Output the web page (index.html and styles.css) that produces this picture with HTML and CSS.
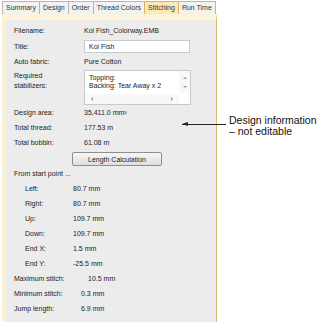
FILE: index.html
```html
<!DOCTYPE html>
<html lang="en">
<head>
  <meta charset="UTF-8"/>
  <title>Stitching</title>
  <link rel="stylesheet" href="styles.css">
</head>
<body>
  <div class="page">
    <div class="tabs">
      <div class="tab">Summary</div>
      <div class="tab">Design</div>
      <div class="tab">Order</div>
      <div class="tab">Thread Colors</div>
      <div class="tab active">Stitching</div>
      <div class="tab">Run Time</div>
    </div>

    <div class="panel">
      <div class="row first">
        <span class="label">Filename:</span>
        <span class="value">Koi Fish_Colorway.EMB</span>
      </div>
      <div class="row title-row">
        <span class="label">Title:</span>
        <div class="field">Koi Fish</div>
      </div>
      <div class="row">
        <span class="label">Auto fabric:</span>
        <span class="value">Pure Cotton</span>
      </div>
      <div class="row stab-row">
        <span class="label two-line">Required<br>stabilizers:</span>
        <div class="listbox">
          <div class="list-text">Topping:<br>Backing: Tear Away x 2</div>
          <div class="vscroll">
            <span class="arr up"></span>
            <span class="arr down"></span>
          </div>
          <div class="hscroll">
            <span class="arr left"></span>
            <span class="arr right"></span>
          </div>
        </div>
      </div>
      <div class="row">
        <span class="label">Design area:</span>
        <span class="value">35,411.0 mm²</span>
      </div>
      <div class="row">
        <span class="label">Total thread:</span>
        <span class="value">177.53 m</span>
      </div>
      <div class="row">
        <span class="label">Total bobbin:</span>
        <span class="value">61.08 m</span>
      </div>
      <div class="btn-row">
        <button class="btn">Length Calculation</button>
      </div>
      <div class="row">
        <span class="label">From start point ...</span>
      </div>
      <div class="row sub">
        <span class="label">Left:</span>
        <span class="value">80.7 mm</span>
      </div>
      <div class="row sub">
        <span class="label">Right:</span>
        <span class="value">80.7 mm</span>
      </div>
      <div class="row sub">
        <span class="label">Up:</span>
        <span class="value">109.7 mm</span>
      </div>
      <div class="row sub">
        <span class="label">Down:</span>
        <span class="value">109.7 mm</span>
      </div>
      <div class="row sub">
        <span class="label">End X:</span>
        <span class="value">1.5 mm</span>
      </div>
      <div class="row sub">
        <span class="label">End Y:</span>
        <span class="value">-25.5 mm</span>
      </div>
      <div class="row max">
        <span class="label">Maximum stitch:</span>
        <span class="value">10.5 mm</span>
      </div>
      <div class="row min">
        <span class="label">Minimum stitch:</span>
        <span class="value">0.3 mm</span>
      </div>
      <div class="row min">
        <span class="label">Jump length:</span>
        <span class="value">6.9 mm</span>
      </div>
    </div>

    <div class="callout">
      <div class="arrow"></div>
      <div class="note">Design information<br>– not editable</div>
    </div>
  </div>
</body>
</html>
```

FILE: styles.css
```css
body {
  margin: 0;
  background: #fff;
  font-family: "Liberation Sans", Arial, sans-serif;
  font-size: 7px;
  color: #222;
}
.page {
  position: relative;
  width: 328px;
  height: 335px;
}
.tabs {
  display: flex;
  margin-left: 2px;
  padding-top: 1px;
  height: 13px;
}
.tab {
  height: 12px;
  line-height: 12px;
  padding: 0 3px;
  background: #f2f2f2;
  border: 1px solid #b5b5b5;
  border-bottom: none;
  margin-right: -1px;
  color: #333;
}
.tab.active {
  background: #fde7b3;
  border-color: #d7b46a;
  position: relative;
  z-index: 1;
}
.panel {
  width: 211px;
  margin-left: 2px;
  background: #ececec;
  border-top: 6px solid #fdf3d8;
  border-left: 3px solid #fdf1d2;
  border-right: 1px solid #d9b96c;
  padding-bottom: 6px;
}
.row {
  display: flex;
  align-items: center;
  height: 15px;
  padding-left: 9px;
}
.row.first {
  margin-top: 3px;
}
.label {
  width: 70px;
  flex-shrink: 0;
}
.value {
  white-space: nowrap;
}
.title-row {
  height: 16px;
}
.field {
  width: 100px;
  height: 11px;
  line-height: 11px;
  padding-left: 4px;
  background: #fff;
  border: 1px solid #c9c9c9;
}
.stab-row {
  height: 35px;
  align-items: flex-start;
  margin-top: 1px;
}
.two-line {
  line-height: 10px;
  padding-top: 1px;
}
.listbox {
  position: relative;
  width: 105px;
  height: 33px;
  background: #fff;
  border: 1px solid #c9c9c9;
}
.list-text {
  padding: 3px 0 0 4px;
  line-height: 8px;
}
.vscroll {
  position: absolute;
  right: 0;
  top: 0;
  width: 11px;
  height: 22px;
  background: #f8f8f8;
}
.hscroll {
  position: absolute;
  left: 0;
  bottom: 0;
  width: 94px;
  height: 10px;
  background: #f8f8f8;
}
.arr {
  position: absolute;
  width: 0;
  height: 0;
  border: 2px solid transparent;
}
.arr.up {
  left: 4px;
  top: 4px;
  border-bottom-color: #9a9a9a;
}
.arr.down {
  left: 4px;
  top: 15px;
  border-top-color: #9a9a9a;
}
.arr.left {
  left: 4px;
  top: 3px;
  border-right-color: #9a9a9a;
}
.arr.right {
  left: 86px;
  top: 3px;
  border-left-color: #9a9a9a;
}
.btn-row {
  display: flex;
  padding-left: 67px;
  margin-top: 2px;
}
.btn {
  width: 90px;
  height: 14px;
  padding: 0;
  font-family: inherit;
  font-size: 7px;
  color: #222;
  background: linear-gradient(#f6f6f6, #dedede);
  border: 1px solid #8e8e8e;
  border-radius: 2px;
}
.row.sub {
  padding-left: 20px;
}
.row.sub .label {
  width: 48px;
}
.row.max .label {
  width: 74px;
}
.row.min .label {
  width: 67px;
}
.callout {
  position: absolute;
  left: 182px;
  top: 115px;
  display: flex;
  align-items: flex-start;
}
.arrow {
  position: relative;
  width: 44px;
  height: 1px;
  margin-top: 9px;
  background: #222;
}
.arrow::before {
  content: "";
  position: absolute;
  left: 0;
  top: -2px;
  border-top: 2.5px solid transparent;
  border-bottom: 2.5px solid transparent;
  border-right: 6px solid #222;
}
.note {
  margin-left: 3px;
  font-size: 10.5px;
  line-height: 11px;
  color: #111;
}
```
